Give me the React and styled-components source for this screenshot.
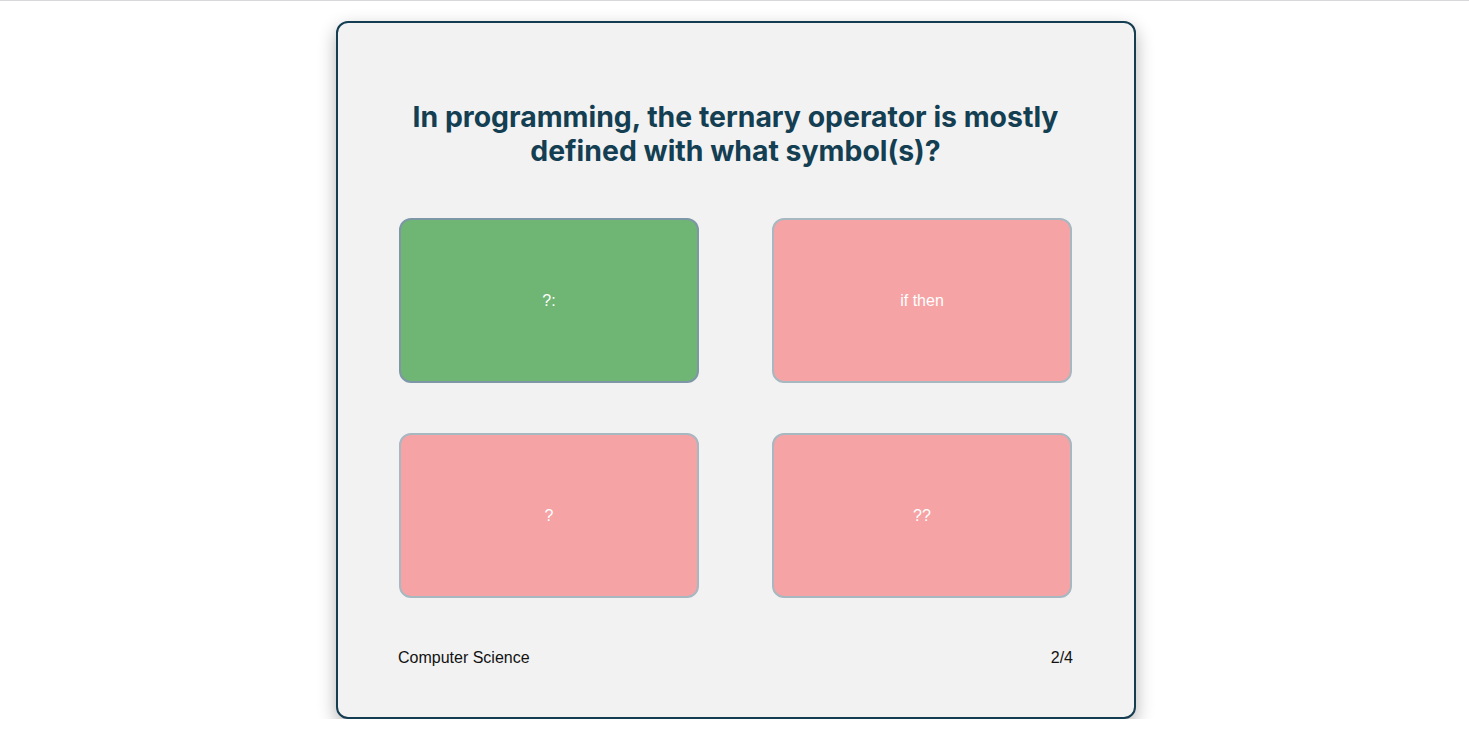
import styled, { createGlobalStyle } from 'styled-components';

const answers = [
  { text: '?:', correct: true },
  { text: 'if then', correct: false },
  { text: '?', correct: false },
  { text: '??', correct: false },
];

const App = () => {
  return (
    <>
      <GlobalStyle />
      <Page>
        <Card>
          <Question>In programming, the ternary operator is mostly defined with what symbol(s)?</Question>

          <AnswerGrid>
            {answers.map((answer) => (
              <AnswerButton key={answer.text} type="button" $correct={answer.correct}>
                {answer.text}
              </AnswerButton>
            ))}
          </AnswerGrid>

          <Footer>
            <span>Computer Science</span>
            <span>2/4</span>
          </Footer>
        </Card>
      </Page>
    </>
  );
};

export default App;

const GlobalStyle = createGlobalStyle`
  * {
    box-sizing: border-box;
  }

  body {
    margin: 0;
    background: #fff;
    border-top: 1px solid #d8d8dc;
    font-family: 'Liberation Sans', Arial, sans-serif;
  }
`;

// frame
const Page = styled.div`
  display: flex;
  justify-content: center;
  padding: 20px 0 0 3px;
`;

const Card = styled.div`
  width: 800px;
  display: flex;
  flex-direction: column;
  padding: 77px 61px 49px 60px;
  background-color: #f2f2f2;
  border: 2px solid #143d52;
  border-radius: 12px;
  box-shadow: 0 7px 18px rgba(0, 0, 0, 0.3);
`;

// component
const Question = styled.h1`
  margin: 0 auto 50px;
  max-width: 670px;
  text-align: center;
  font-family: Inter, 'Noto Sans', sans-serif;
  font-size: 28.4px;
  line-height: 34px;
  font-weight: 700;
  color: #143f52;
`;

const AnswerGrid = styled.div`
  display: grid;
  grid-template-columns: 300px 300px;
  grid-template-rows: 165px 165px;
  column-gap: 73px;
  row-gap: 50px;
  padding-left: 1px;
`;

const AnswerButton = styled.button`
  display: flex;
  align-items: center;
  justify-content: center;
  padding: 0;
  border: 2px solid ${(props) => (props.$correct ? '#7e97a6' : '#a7b8c1')};
  border-radius: 12px;
  background-color: ${(props) => (props.$correct ? '#6fb674' : '#f6a3a5')};
  color: #fff;
  font-family: 'Liberation Sans', Arial, sans-serif;
  font-size: 16px;
  cursor: pointer;
`;

const Footer = styled.div`
  display: flex;
  justify-content: space-between;
  margin-top: 50px;
  font-size: 16px;
  line-height: 20px;
  color: #111;
`;
